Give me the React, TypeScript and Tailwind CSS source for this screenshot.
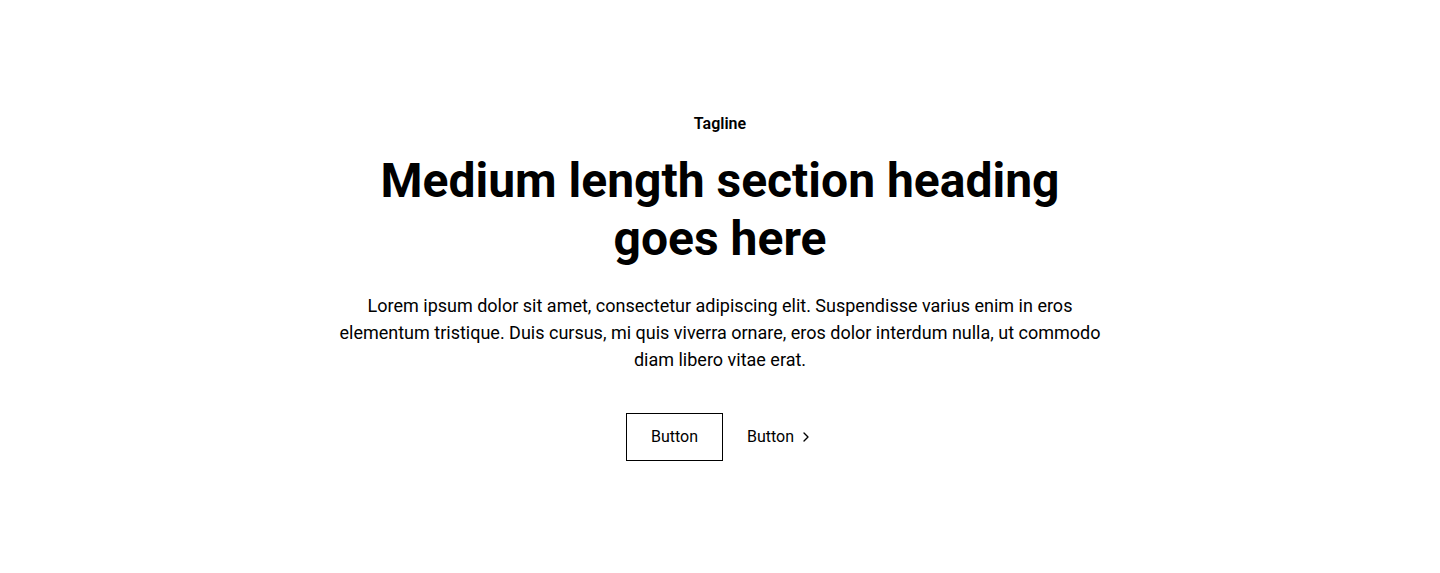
import React from 'react';
import { ChevronRight } from 'lucide-react';

export default function App() {
  return (
    <section
      className="bg-white px-[5%] py-28 text-black"
      style={{ fontFamily: 'Roboto, "Noto Sans", sans-serif' }}
    >
      {/* Header block */}
      <div className="mx-auto flex w-full max-w-[768px] flex-col items-center text-center">
        <p className="mb-4 text-base leading-6 font-semibold">Tagline</p>
        <h2 className="mb-[25px] text-[48px] leading-[1.2] font-bold">
          Medium length section heading goes here
        </h2>
        <p className="text-lg leading-[1.5]">
          Lorem ipsum dolor sit amet, consectetur adipiscing elit. Suspendisse varius enim in eros
          elementum tristique. Duis cursus, mi quis viverra ornare, eros dolor interdum nulla, ut
          commodo diam libero vitae erat.
        </p>

        {/* Actions */}
        <div className="mt-10 flex items-center gap-6">
          <button className="h-12 border border-black px-6 text-base">Button</button>
          <button className="flex items-center gap-1 text-base">
            Button
            <ChevronRight size={16} strokeWidth={2} />
          </button>
        </div>
      </div>
    </section>
  );
}
